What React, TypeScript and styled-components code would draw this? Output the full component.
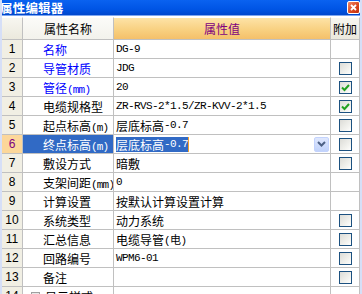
import React from "react";
import styled, { createGlobalStyle, css } from "styled-components";

const Global = createGlobalStyle`
  html, body { margin: 0; padding: 0; overflow: hidden; background: #ffffff; }
  #root { width: 362px; height: 294px; }
`;

const Window = styled.div`
  width: 362px;
  height: 294px;
  display: flex;
  flex-direction: column;
  overflow: hidden;
  background: #ffffff;
  box-sizing: border-box;
  border-left: 2px solid #d6dff7;
  border-right: 2px solid #d6dff7;
`;

const TitleBar = styled.div`
  height: 15px;
  margin: 0 -2px;
  flex: none;
  display: flex;
  align-items: center;
  justify-content: space-between;
  background: linear-gradient(to bottom, #0a62f0 0%, #0055e5 60%, #0047cc 100%);
  border-bottom: 1px solid #7ea6f0;
`;

const Title = styled.span`
  color: #ffffff;
  font-family: "Noto Sans CJK SC", sans-serif;
  font-weight: 700;
  font-size: 12.5px;
  line-height: 13px;
  height: 13px;
  display: block;
  letter-spacing: 0.2px;
`;

const CloseBtn = styled.div`
  width: 13px;
  height: 13px;
  margin-right: 2px;
  box-sizing: border-box;
  border: 1px solid #ffffff;
  border-radius: 2px;
  background: linear-gradient(135deg, #f08a6a 0%, #d8441c 60%, #c03010 100%);
  display: flex;
  align-items: center;
  justify-content: center;
`;

const Gap = styled.div`
  height: 1px;
  flex: none;
  background: #ffffff;
`;

const Grid = styled.div`
  display: grid;
  grid-template-columns: 21px 91px 217px 29px;
  grid-auto-rows: 19px;
  grid-template-rows: 23px;
  align-content: start;
`;

const HeadCell = styled.div<{ $kind: "plain" | "name" | "value" }>`
  box-sizing: border-box;
  border-right: 1px solid #c0c0c0;
  border-bottom: 1px solid #c0c0c0;
  border-top: 1px solid #ffffff;
  display: flex;
  align-items: center;
  justify-content: center;
  font-family: "Noto Sans CJK SC", sans-serif;
  font-size: 12px;
  color: #000000;
  white-space: nowrap;
  overflow: hidden;
  ${(p) =>
    p.$kind === "plain" &&
    css`
      background: linear-gradient(to bottom, #f7f6f0 0%, #ebe9dd 100%);
    `}
  ${(p) =>
    p.$kind === "name" &&
    css`
      background: linear-gradient(to bottom, #fbfbf8 0%, #f3f2ec 100%);
    `}
  ${(p) =>
    p.$kind === "value" &&
    css`
      background: linear-gradient(to bottom, #fde3a7 0%, #f8cf7e 60%, #f4c06a 100%);
      color: #800080;
    `}
`;

const NumCell = styled.div<{ $active?: boolean }>`
  box-sizing: border-box;
  border-right: 1px solid #c0c0c0;
  border-bottom: 1px solid #c0c0c0;
  background: ${(p) => (p.$active ? "#fcd79a" : "#f1efe4")};
  color: ${(p) => (p.$active ? "#800080" : "#000000")};
  font-family: "Liberation Sans", sans-serif;
  font-size: 12px;
  display: flex;
  align-items: center;
  justify-content: center;
`;

const NameCell = styled.div<{ $blue?: boolean; $selected?: boolean }>`
  box-sizing: border-box;
  border-right: 1px solid #c0c0c0;
  border-bottom: 1px solid #c0c0c0;
  padding-left: 20px;
  display: flex;
  align-items: center;
  gap: 2px;
  font-family: "Noto Sans CJK SC", sans-serif;
  font-size: 12px;
  white-space: nowrap;
  overflow: hidden;
  color: ${(p) => (p.$selected ? "#ffffff" : p.$blue ? "#0000ff" : "#000000")};
  background: ${(p) => (p.$selected ? "#316ac5" : "#ffffff")};
`;

const Unit = styled.span`
  font-family: "Liberation Mono", "Noto Sans CJK SC", monospace;
  font-size: 11px;
  letter-spacing: -0.8px;
`;

const ValueCell = styled.div`
  box-sizing: border-box;
  border-right: 1px solid #c0c0c0;
  border-bottom: 1px solid #c0c0c0;
  padding-left: 2px;
  display: flex;
  align-items: center;
  white-space: nowrap;
  overflow: hidden;
  font-family: "Liberation Mono", "Noto Sans CJK SC", monospace;
  font-size: 11px;
  letter-spacing: -0.6px;
  color: #000000;
`;

const Cjk = styled.span`
  font-family: "Noto Sans CJK SC", sans-serif;
  font-size: 12px;
  letter-spacing: 0;
`;

const Selection = styled.span`
  background: #316ac5;
  color: #ffffff;
  display: inline-flex;
  align-items: center;
  height: 15px;
  border-right: 1px solid #f0a030;
`;

const DropBtn = styled.div`
  margin-left: auto;
  margin-right: 1px;
  width: 15px;
  height: 15px;
  box-sizing: border-box;
  border: 1px solid #c3d3fd;
  border-radius: 2px;
  background: linear-gradient(to bottom, #dfe7fd 0%, #c1d3fb 100%);
  display: flex;
  align-items: center;
  justify-content: center;
`;

const CheckCell = styled.div`
  box-sizing: border-box;
  border-right: 1px solid #c0c0c0;
  border-bottom: 1px solid #c0c0c0;
  display: flex;
  align-items: center;
  justify-content: center;
`;

const Box = styled.div`
  width: 13px;
  height: 13px;
  box-sizing: border-box;
  border: 1px solid #1c5180;
  background: linear-gradient(135deg, #dcdcd7 0%, #f4f4f0 70%, #ffffff 100%);
  display: flex;
  align-items: center;
  justify-content: center;
`;

const ExpandBox = styled.span`
  width: 9px;
  height: 9px;
  box-sizing: border-box;
  border: 1px solid #a0a0a0;
  background: #e8e8e8;
  margin-left: -12px;
  margin-right: 3px;
  flex: none;
`;

type Row = {
  n: number;
  name: string;
  unit?: string;
  value: string;
  cjk?: boolean;
  blue?: boolean;
  check?: "on" | "off";
  selected?: boolean;
  expand?: boolean;
};

const rows: Row[] = [
  { n: 1, name: "名称", value: "DG-9", blue: true },
  { n: 2, name: "导管材质", value: "JDG", blue: true, check: "off" },
  { n: 3, name: "管径", unit: "(mm)", value: "20", blue: true, check: "on" },
  { n: 4, name: "电缆规格型", value: "ZR-RVS-2*1.5/ZR-KVV-2*1.5", check: "on" },
  { n: 5, name: "起点标高", unit: "(m)", value: "层底标高-0.7", cjk: true, check: "off" },
  { n: 6, name: "终点标高", unit: "(m)", value: "层底标高-0.7", cjk: true, check: "off", selected: true },
  { n: 7, name: "敷设方式", value: "暗敷", cjk: true, check: "off" },
  { n: 8, name: "支架间距", unit: "(mm)", value: "0" },
  { n: 9, name: "计算设置", value: "按默认计算设置计算", cjk: true },
  { n: 10, name: "系统类型", value: "动力系统", cjk: true, check: "off" },
  { n: 11, name: "汇总信息", value: "电缆导管(电)", cjk: true, check: "off" },
  { n: 12, name: "回路编号", value: "WPM6-01", check: "off" },
  { n: 13, name: "备注", value: "", check: "off" },
  { n: 14, name: "显示样式", value: "", expand: true },
];

const Tick = () => (
  <svg width="9" height="9" viewBox="0 0 9 9">
    <path d="M1 4.5 L3.5 7 L8 2" fill="none" stroke="#21a121" strokeWidth="2" />
  </svg>
);

const renderValue = (r: Row) => {
  const split = r.cjk ? r.value.match(/^([^\x00-\x7f]*)(.*)$/) : null;
  const content = split ? (
    <>
      <Cjk>{split[1]}</Cjk>
      {split[2]}
    </>
  ) : (
    r.value
  );
  if (r.selected) {
    return (
      <>
        <Selection>{content}</Selection>
        <DropBtn>
          <svg width="9" height="6" viewBox="0 0 9 6">
            <path d="M1 1 L4.5 4.5 L8 1" fill="none" stroke="#4d6185" strokeWidth="2" />
          </svg>
        </DropBtn>
      </>
    );
  }
  return content;
};

export default function App() {
  return (
    <>
      <Global />
      <Window>
        <TitleBar>
          <Title>属性编辑器</Title>
          <CloseBtn>
            <svg width="7" height="7" viewBox="0 0 7 7">
              <path d="M1 1 L6 6 M6 1 L1 6" stroke="#ffffff" strokeWidth="1.8" />
            </svg>
          </CloseBtn>
        </TitleBar>
        <Gap />
        <Grid>
          <HeadCell $kind="plain" />
          <HeadCell $kind="name">属性名称</HeadCell>
          <HeadCell $kind="value">属性值</HeadCell>
          <HeadCell $kind="plain">附加</HeadCell>
          {rows.map((r) => (
            <React.Fragment key={r.n}>
              <NumCell $active={r.selected}>{r.n}</NumCell>
              <NameCell $blue={r.blue} $selected={r.selected}>
                {r.expand && <ExpandBox />}
                <span>
                  {r.name}
                  {r.unit && <Unit>{r.unit}</Unit>}
                </span>
              </NameCell>
              <ValueCell>{renderValue(r)}</ValueCell>
              <CheckCell>
                {r.check && <Box>{r.check === "on" && <Tick />}</Box>}
              </CheckCell>
            </React.Fragment>
          ))}
        </Grid>
      </Window>
    </>
  );
}
